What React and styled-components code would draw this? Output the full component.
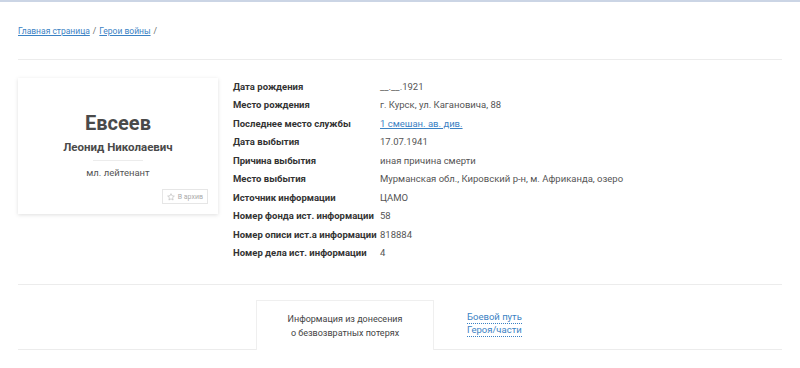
import React from "react";
import styled, { createGlobalStyle } from "styled-components";

const Global = createGlobalStyle`
  html, body { margin: 0; padding: 0; background: #fff; }
  body { font-family: Roboto, "Noto Sans", sans-serif; color: #333; }
`;

const TopBar = styled.div`
  height: 2px;
  background: #cbd5e5;
`;

const Page = styled.div`
  padding: 0 18px;
`;

const Crumbs = styled.nav`
  padding-top: 22px;
  height: 14px;
  font-size: 8.5px;
  line-height: 14px;
  color: #666;
  display: flex;
  gap: 3px;
`;

const CrumbLink = styled.a`
  color: #3b82c4;
  text-decoration: underline;
`;

const Rule = styled.hr`
  border: 0;
  border-top: 1px solid #ececec;
  margin: ${(p) => p.$m || "0"};
`;

const Main = styled.div`
  display: flex;
  align-items: flex-start;
  margin-top: 18px;
`;

const Card = styled.div`
  width: 200px;
  height: 136px;
  box-sizing: border-box;
  box-shadow: 0 1px 4px rgba(0, 0, 0, 0.13);
  display: flex;
  flex-direction: column;
  align-items: center;
  padding-top: 33px;
  position: relative;
`;

const Surname = styled.div`
  font-size: 20px;
  font-weight: 700;
  color: #4a4a4a;
  line-height: 24px;
`;

const Given = styled.div`
  font-size: 11.5px;
  font-weight: 700;
  color: #4a4a4a;
  line-height: 14px;
  margin-top: 5px;
`;

const Short = styled.div`
  width: 50px;
  height: 1px;
  background: #ececec;
  margin-top: 6px;
`;

const Rank = styled.div`
  font-size: 9.5px;
  color: #555;
  line-height: 12px;
  margin-top: 6px;
`;

const ArchiveBtn = styled.button`
  position: absolute;
  right: 10px;
  bottom: 10px;
  height: 15px;
  padding: 0 4px;
  border: 1px solid #e6e6e6;
  background: #fff;
  font-family: inherit;
  font-size: 7px;
  color: #aaa;
  display: flex;
  align-items: center;
  gap: 3px;
`;

const Table = styled.div`
  margin-left: 15px;
  margin-top: -1px;
  display: grid;
  grid-template-columns: 147px auto;
  grid-auto-rows: 18.5px;
  align-items: center;
  font-size: 9.5px;
  white-space: nowrap;
`;

const Label = styled.div`
  font-weight: 700;
  color: #333;
`;

const Value = styled.div`
  color: #555;
`;

const ValueLink = styled.a`
  color: #3b82c4;
  text-decoration: underline;
`;

const Tabs = styled.div`
  display: flex;
  justify-content: center;
`;

const ActiveTab = styled.div`
  width: 178px;
  height: 50px;
  box-sizing: border-box;
  border: 1px solid #efefef;
  border-bottom: 0;
  background: #fff;
  display: flex;
  align-items: center;
  justify-content: center;
  text-align: center;
  font-size: 9px;
  line-height: 14px;
  color: #444;
  margin-top: 15px;
`;

const TabLink = styled.div`
  width: 110px;
  box-sizing: border-box;
  padding-left: 33px;
  margin-top: 26px;
  display: flex;
  flex-direction: column;
  align-items: flex-start;
  font-size: 9.5px;
  line-height: 13px;
  color: #3b82c4;
`;

const Dotted = styled.span`
  border-bottom: 1px dotted #3b82c4;
  line-height: 12px;
`;

const BottomRule = styled.div`
  border-top: 1px solid #ececec;
  margin-top: -1px;
`;

const rows = [
  ["Дата рождения", "__.__.1921"],
  ["Место рождения", "г. Курск, ул. Кагановича, 88"],
  ["Последнее место службы", null],
  ["Дата выбытия", "17.07.1941"],
  ["Причина выбытия", "иная причина смерти"],
  ["Место выбытия", "Мурманская обл., Кировский р-н, м. Африканда, озеро"],
  ["Источник информации", "ЦАМО"],
  ["Номер фонда ист. информации", "58"],
  ["Номер описи ист.а информации", "818884"],
  ["Номер дела ист. информации", "4"],
];

export default function App() {
  return (
    <>
      <Global />
      <TopBar />
      <Page>
        <Crumbs>
          <CrumbLink href="#">Главная страница</CrumbLink>
          <span>/</span>
          <CrumbLink href="#">Герои войны</CrumbLink>
          <span>/</span>
        </Crumbs>
        <Rule $m="21px 0 0" />
        <Main>
          <Card>
            <Surname>Евсеев</Surname>
            <Given>Леонид Николаевич</Given>
            <Short />
            <Rank>мл. лейтенант</Rank>
            <ArchiveBtn>
              <svg width="8" height="8" viewBox="0 0 24 24" fill="none" stroke="#bbb" strokeWidth="2">
                <path d="M12 2l3 6.5 7 .8-5.2 4.8 1.4 7-6.2-3.6-6.2 3.6 1.4-7L2 9.3l7-.8z" />
              </svg>
              В архив
            </ArchiveBtn>
          </Card>
          <Table>
            {rows.map(([l, v]) => (
              <React.Fragment key={l}>
                <Label>{l}</Label>
                {v === null ? (
                  <Value>
                    <ValueLink href="#">1 смешан. ав. див.</ValueLink>
                  </Value>
                ) : (
                  <Value>{v}</Value>
                )}
              </React.Fragment>
            ))}
          </Table>
        </Main>
        <Rule $m="22px 0 0" />
        <Tabs>
          <ActiveTab>
            Информация из донесения
            <br />о безвозвратных потерях
          </ActiveTab>
          <TabLink>
            <Dotted>Боевой путь</Dotted>
            <Dotted>Героя/части</Dotted>
          </TabLink>
        </Tabs>
        <BottomRule />
      </Page>
    </>
  );
}
